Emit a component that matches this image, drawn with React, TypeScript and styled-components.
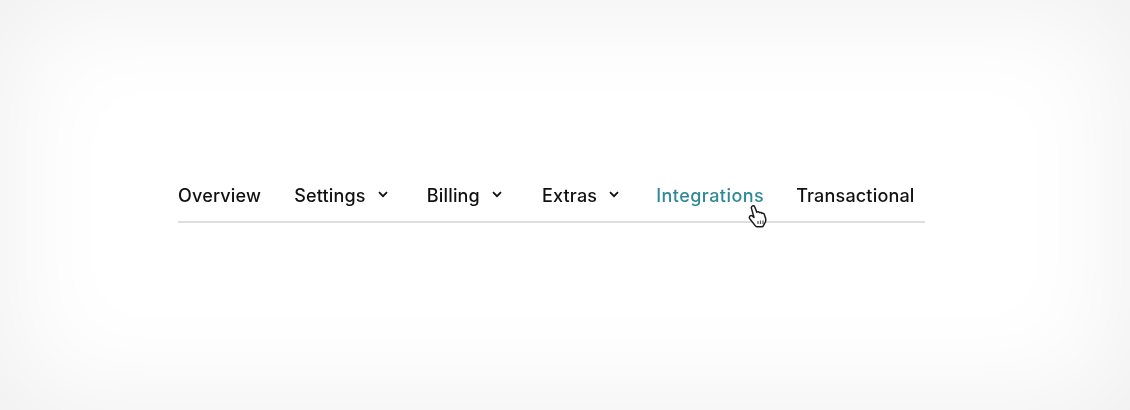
import styled, { createGlobalStyle } from "styled-components";

const GlobalStyle = createGlobalStyle`
  html, body {
    margin: 0;
    background: #fff;
  }
`;

const Page = styled.div`
  width: 1130px;
  height: 410px;
  box-sizing: border-box;
  padding: 178px 205px 0 178px;
  overflow: hidden;
  background: #fff;
  box-shadow: inset 0 0 120px 0 #eeeeee;
  font-family: Inter, "Liberation Sans", sans-serif;
`;

const TabBar = styled.nav`
  position: relative;
  display: flex;
  align-items: center;
  height: 45px;
  padding-bottom: 9px;
  border-bottom: 2px solid #dedede;
  box-sizing: border-box;
  filter: blur(0.45px);
`;

const Tab = styled.a<{ $active?: boolean; $gap: number }>`
  display: flex;
  align-items: center;
  margin-right: ${({ $gap }) => $gap}px;
  font-size: 18px;
  font-weight: 450;
  letter-spacing: ${({ $active }) => ($active ? "0.45px" : "0.18px")};
  color: ${({ $active }) => ($active ? "#2f8a96" : "#111")};
  white-space: nowrap;
`;

const Chevron = styled.svg`
  width: 10px;
  height: 7px;
  margin-left: 12px;
  margin-top: -1px;
`;

const Pointer = styled.svg`
  position: absolute;
  left: 569px;
  top: 26px;
  width: 21px;
  height: 25px;
`;

const tabs = [
  { label: "Overview", gap: 33 },
  { label: "Settings", gap: 39, menu: true },
  { label: "Billing", gap: 40, menu: true },
  { label: "Extras", gap: 37, menu: true },
  { label: "Integrations", gap: 32, active: true },
  { label: "Transactional", gap: 0 },
];

export default function App() {
  return (
    <>
      <GlobalStyle />
      <Page>
        <TabBar>
          {tabs.map((tab) => (
            <Tab key={tab.label} $active={tab.active} $gap={tab.gap}>
              {tab.label}
              {tab.menu && (
                <Chevron viewBox="0 0 10 7">
                  <path d="M1 1.2 5 5.2 9 1.2" fill="none" stroke="#111" strokeWidth="1.800" />
                </Chevron>
              )}
            </Tab>
          ))}
          <Pointer viewBox="0 0 21 25">
            <path
              d="M5 2.2c1-.9 2.4-.4 2.8.8l2 5.2c.9-.8 2.2-.5 2.7.5.8-.6 2-.3 2.5.7.9-.4 1.9 0 2.3 1l1.2 3.6c.6 2 .2 4-1 5.6l-1.2 2.2c-.3.6-.8.9-1.4.9H9.8c-.6 0-1.1-.3-1.4-.8l-5.6-7.2c-.7-1-.5-2.2.4-2.8.8-.5 1.7-.4 2.4.2l1.4 1.3L4.500 4.600c-.3-.9-.2-1.800.5-2.400Z"
              fill="#fff"
              stroke="#1a1a1a"
              strokeWidth="1.500"
              strokeLinejoin="round"
            />
            <path d="M11 17v3M13.500 16.500v3.500M16 16.500v3.500" stroke="#555" strokeWidth="1.200" fill="none" />
          </Pointer>
        </TabBar>
      </Page>
    </>
  );
}
